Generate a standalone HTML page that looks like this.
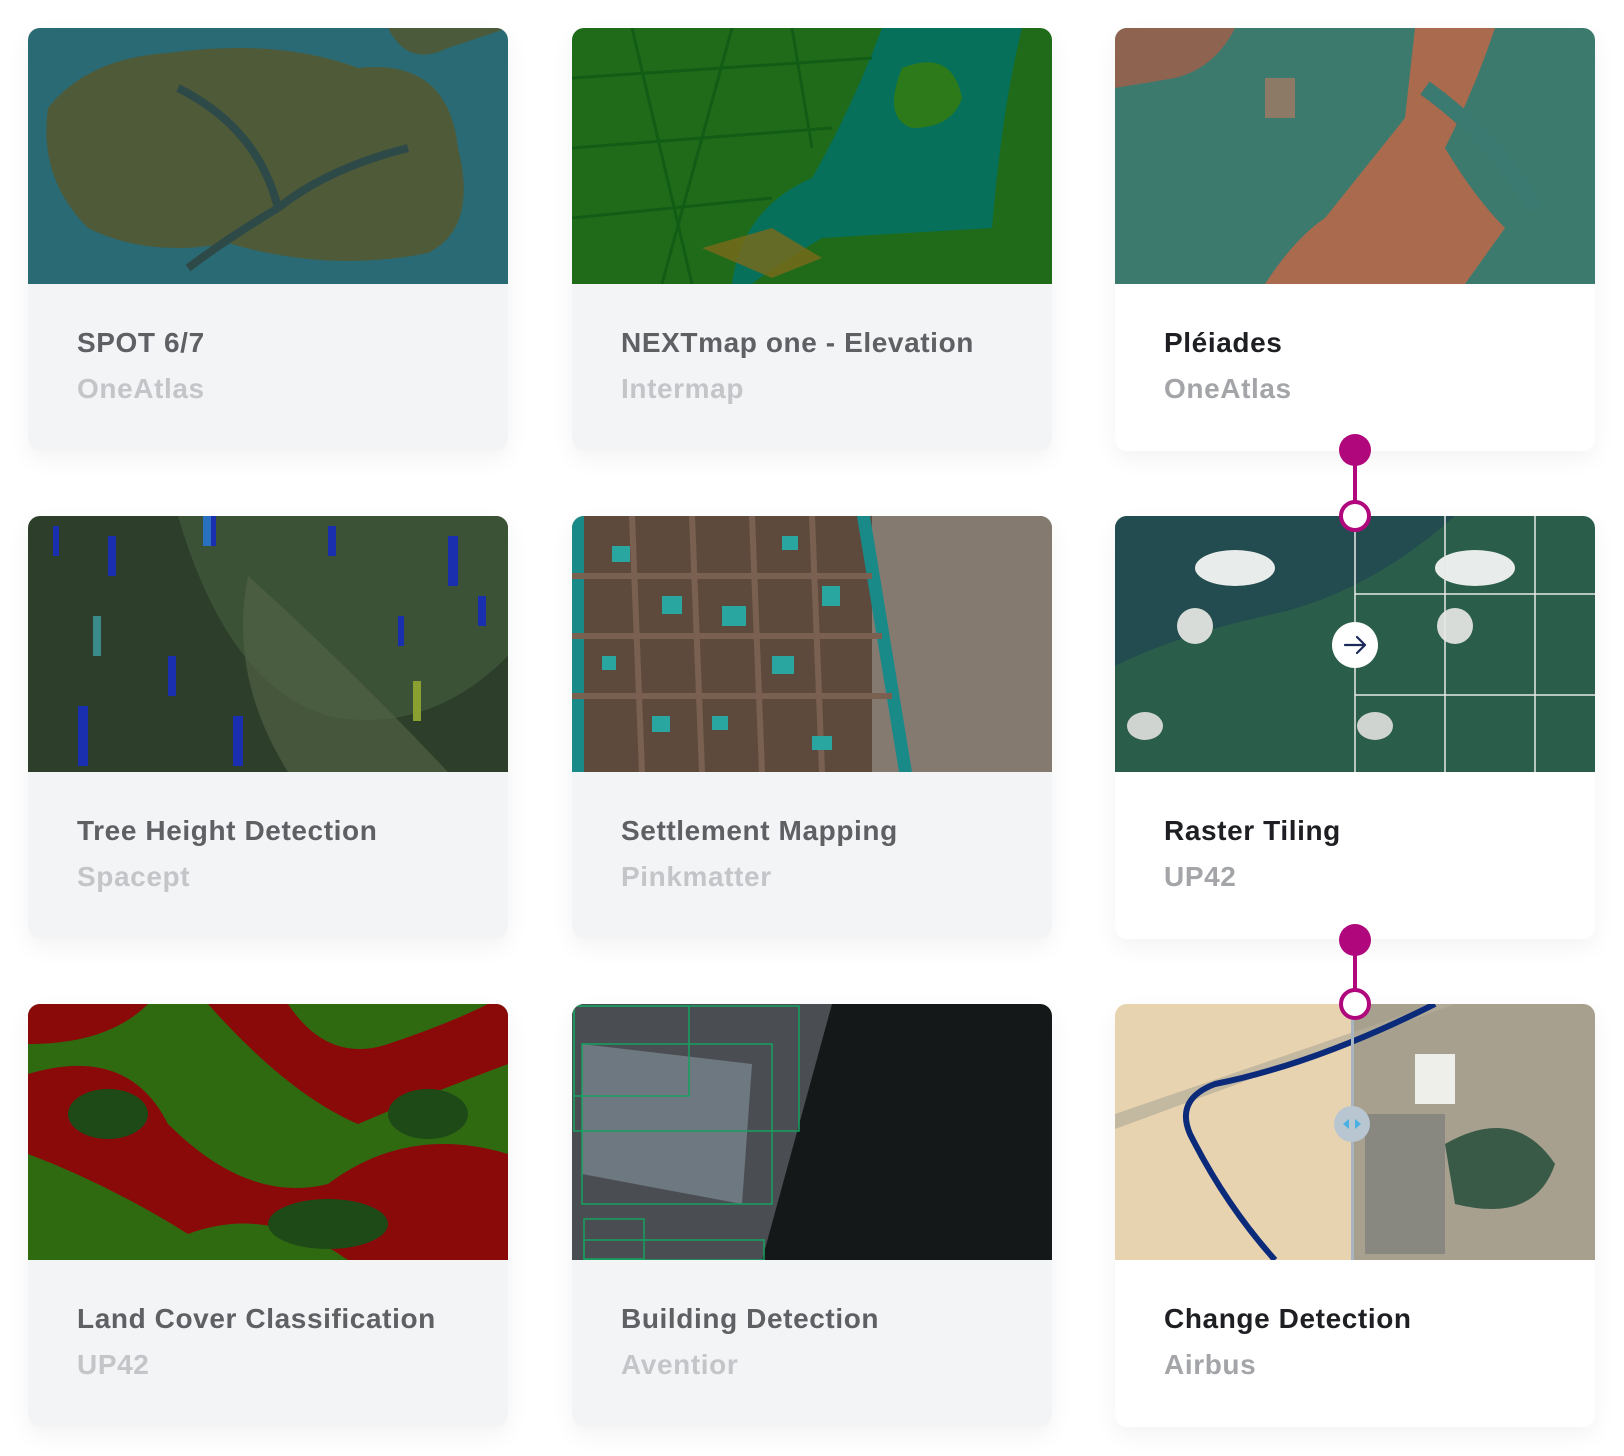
<!DOCTYPE html>
<html><head><meta charset="utf-8"><style>
*{margin:0;padding:0;box-sizing:border-box}
body{width:1624px;height:1456px;background:#fff;position:relative;overflow:hidden;font-family:"Liberation Sans",Arial,sans-serif}
.card{position:absolute;width:480px;height:423px;border-radius:12px;background:#f3f4f6;overflow:hidden;box-shadow:0 8px 24px rgba(0,0,0,0.05)}
.card.w{background:#fff}
.img{position:absolute;left:0;top:0;width:480px;height:256px;overflow:hidden}
.img svg{display:block}
.t{position:absolute;left:49px;top:299px;font-size:28px;font-weight:bold;color:#5f6064;white-space:nowrap;letter-spacing:0.6px}
.s{position:absolute;left:49px;top:345px;font-size:28px;font-weight:bold;color:#c3c5c8;white-space:nowrap;letter-spacing:0.6px}
.w .t{color:#1e1f22}.w .s{color:#a3a5a8}
.dot{position:absolute;width:32px;height:32px;border-radius:50%;background:#b0087c}
.ring{position:absolute;width:32px;height:32px;border-radius:50%;background:#fff;border:4px solid #b0087c}
.line{position:absolute;width:4px;background:#b0087c}
</style></head><body>

<div class="card" style="left:28px;top:28px"><div class="img"><svg width="480" height="256">
<rect width="480" height="256" fill="#2a6a74"/>
<path d="M20 80 Q60 30 140 25 Q250 10 330 40 Q420 30 430 120 Q450 200 400 225 Q300 245 200 215 Q120 230 60 200 Q10 150 20 80Z" fill="#4f5a38"/>
<path d="M150 60 Q230 100 250 180 M250 180 Q300 140 380 120 M250 180 Q200 210 160 240" stroke="#2e4a48" stroke-width="8" fill="none"/>
<path d="M360 0 Q380 40 420 20 L480 0Z" fill="#4a5a3a"/>
</svg></div><div class="t">SPOT 6/7</div><div class="s">OneAtlas</div></div>

<div class="card" style="left:572px;top:28px"><div class="img"><svg width="480" height="256">
<rect width="480" height="256" fill="#1f6b1a"/>
<path d="M310 0 L450 0 Q430 80 420 200 L250 210 Q200 240 180 256 L160 256 Q170 180 240 150 Q280 80 310 0Z" fill="#06705a"/>
<path d="M130 220 L200 200 L250 230 L200 250Z" fill="#7a6a1a" opacity=".8"/>
<path d="M330 40 Q380 20 390 70 Q380 100 340 100 Q310 90 330 40Z" fill="#2d7a1a"/>
<g stroke="#0e5a14" stroke-width="3" opacity=".8"><path d="M0 50 L300 30 M0 120 L260 100 M0 190 L200 170 M60 0 L120 256 M160 0 L90 256 M220 0 L240 120"/></g>
</svg></div><div class="t">NEXTmap one - Elevation</div><div class="s">Intermap</div></div>

<div class="card w" style="left:1115px;top:28px"><div class="img"><svg width="480" height="256">
<rect width="480" height="256" fill="#3c7a6e"/>
<path d="M300 0 L380 0 Q360 60 330 120 Q360 170 390 200 L350 256 L150 256 Q180 210 210 190 Q250 140 290 90Z" fill="#a96a4e"/>
<path d="M0 0 L120 0 Q100 40 60 50 L0 60Z" fill="#8e6450"/>
<path d="M310 60 Q380 110 420 180" stroke="#3a7a70" stroke-width="16" fill="none"/>
<rect x="150" y="50" width="30" height="40" fill="#8c7a66"/>
</svg></div><div class="t">Pléiades</div><div class="s">OneAtlas</div></div>

<div class="card" style="left:28px;top:516px"><div class="img"><svg width="480" height="256">
<rect width="480" height="256" fill="#2d3f2a"/>
<path d="M150 0 L480 0 L480 140 Q400 220 300 200 Q200 170 150 0Z" fill="#3c5236"/>
<path d="M220 60 Q320 150 420 256 L260 256 Q200 160 220 60Z" fill="#55664a" opacity=".6"/>
<g fill="#1a2fb0"><rect x="25" y="10" width="6" height="30"/><rect x="80" y="20" width="8" height="40"/><rect x="180" y="0" width="8" height="30"/><rect x="300" y="10" width="8" height="30"/><rect x="420" y="20" width="10" height="50"/><rect x="140" y="140" width="8" height="40"/><rect x="205" y="200" width="10" height="50"/><rect x="370" y="100" width="6" height="30"/><rect x="50" y="190" width="10" height="60"/><rect x="450" y="80" width="8" height="30"/></g>
<rect x="65" y="100" width="8" height="40" fill="#3a8a8a"/><rect x="385" y="165" width="8" height="40" fill="#8aa030"/><rect x="175" y="0" width="8" height="30" fill="#2a70c0"/>
</svg></div><div class="t">Tree Height Detection</div><div class="s">Spacept</div></div>

<div class="card" style="left:572px;top:516px"><div class="img"><svg width="480" height="256">
<rect width="480" height="256" fill="#5e4a3c"/>
<rect x="300" width="180" height="256" fill="#857a70"/>
<path d="M285 0 L298 0 L340 256 L327 256Z" fill="#1a8a88"/>
<path d="M0 0 L12 0 L12 256 L0 256Z" fill="#1a8a88"/>
<g stroke="#7a6050" stroke-width="6"><path d="M0 60 L300 60 M0 120 L310 120 M0 180 L320 180 M60 0 L70 256 M120 0 L130 256 M180 0 L190 256 M240 0 L250 256"/></g>
<g fill="#2aa6a0"><rect x="40" y="30" width="18" height="16"/><rect x="90" y="80" width="20" height="18"/><rect x="150" y="90" width="24" height="20"/><rect x="210" y="20" width="16" height="14"/><rect x="200" y="140" width="22" height="18"/><rect x="80" y="200" width="18" height="16"/><rect x="250" y="70" width="18" height="20"/><rect x="140" y="200" width="16" height="14"/><rect x="30" y="140" width="14" height="14"/><rect x="240" y="220" width="20" height="14"/></g>
</svg></div><div class="t">Settlement Mapping</div><div class="s">Pinkmatter</div></div>

<div class="card w" style="left:1115px;top:516px"><div class="img"><svg width="480" height="256">
<rect width="480" height="256" fill="#2a5e4a"/>
<path d="M0 0 L340 0 Q250 80 150 100 Q60 120 0 150Z" fill="#234c50"/>
<ellipse cx="120" cy="52" rx="40" ry="18" fill="#e8ecea"/><ellipse cx="360" cy="52" rx="40" ry="18" fill="#e8ecea"/>
<ellipse cx="80" cy="110" rx="18" ry="18" fill="#d8dcd8"/><ellipse cx="340" cy="110" rx="18" ry="18" fill="#d8dcd8"/>
<ellipse cx="30" cy="210" rx="18" ry="14" fill="#d0d4d0"/><ellipse cx="260" cy="210" rx="18" ry="14" fill="#d0d4d0"/>
<g stroke="#e8e8e8" stroke-width="1.5"><path d="M240 0 V256 M330 0 V256 M420 0 V256 M240 78 H480 M240 179 H480"/></g>
</svg></div><div class="t">Raster Tiling</div><div class="s">UP42</div></div>

<div class="card" style="left:28px;top:1004px"><div class="img"><svg width="480" height="256">
<rect width="480" height="256" fill="#2f6a10"/>
<path d="M0 70 Q100 40 140 120 Q220 200 300 180 Q380 120 480 150 L480 256 L320 256 Q240 200 160 230 Q80 180 0 150Z" fill="#8a0a0a"/>
<path d="M180 0 L260 0 Q300 60 360 40 Q420 20 460 0 L480 0 L480 60 Q400 90 330 120 Q260 90 180 0Z" fill="#8a0a0a"/>
<path d="M0 0 L120 0 Q80 40 0 40Z" fill="#8a0a0a"/>
<ellipse cx="300" cy="220" rx="60" ry="25" fill="#1e4a18"/><ellipse cx="80" cy="110" rx="40" ry="25" fill="#1e4a18"/><ellipse cx="400" cy="110" rx="40" ry="25" fill="#1e4a18"/>
</svg></div><div class="t">Land Cover Classification</div><div class="s">UP42</div></div>

<div class="card" style="left:572px;top:1004px"><div class="img"><svg width="480" height="256">
<rect width="480" height="256" fill="#151818"/>
<path d="M0 0 L260 0 L190 256 L0 256Z" fill="#4a4e52"/>
<path d="M10 40 L180 60 L170 200 L10 170Z" fill="#6e7880"/>
<g fill="none" stroke="#16a060" stroke-width="1.5"><rect x="2" y="2" width="115" height="90"/><rect x="2" y="2" width="225" height="125"/><rect x="10" y="40" width="190" height="160"/><rect x="12" y="215" width="60" height="40"/><rect x="12" y="236" width="180" height="20"/></g>
</svg></div><div class="t">Building Detection</div><div class="s">Aventior</div></div>

<div class="card w" style="left:1115px;top:1004px"><div class="img"><svg width="480" height="256">
<rect width="480" height="256" fill="#e8d3b0"/>
<rect x="236" width="244" height="256" fill="#a8a08e"/>
<path d="M0 110 L320 0 L340 0 L0 125Z" fill="#b4ad9a" opacity=".7"/>
<rect x="300" y="50" width="40" height="50" fill="#eeeeea"/>
<path d="M330 140 Q400 100 440 160 Q420 220 340 200Z" fill="#3a5a48"/>
<rect x="250" y="110" width="80" height="140" fill="#888880"/>
<path d="M320 0 Q200 60 100 80 Q60 95 75 130 Q110 200 160 256" stroke="#0b2a7a" stroke-width="6" fill="none"/>
<rect x="236" width="3" height="256" fill="#a8b4c0"/>
<circle cx="237" cy="120" r="18" fill="#b8c6d2"/>
<path d="M228 120 L234 115 V125Z M246 120 L240 115 V125Z" fill="#4ab0e0"/>
</svg></div><div class="t">Change Detection</div><div class="s">Airbus</div></div>

<div class="line" style="left:1353px;top:450px;height:66px"></div>
<div class="dot" style="left:1339px;top:434px"></div>
<div class="ring" style="left:1339px;top:500px"></div>
<div class="line" style="left:1353px;top:940px;height:64px"></div>
<div class="dot" style="left:1339px;top:924px"></div>
<div class="ring" style="left:1339px;top:988px"></div>

<div style="position:absolute;left:1332px;top:622px;width:46px;height:46px;border-radius:50%;background:#fff">
<svg width="46" height="46"><path d="M13 23 H33 M25 15 L33 23 L25 31" stroke="#1c2a5a" stroke-width="2.2" fill="none" stroke-linecap="round" stroke-linejoin="round"/></svg></div>
</body></html>
